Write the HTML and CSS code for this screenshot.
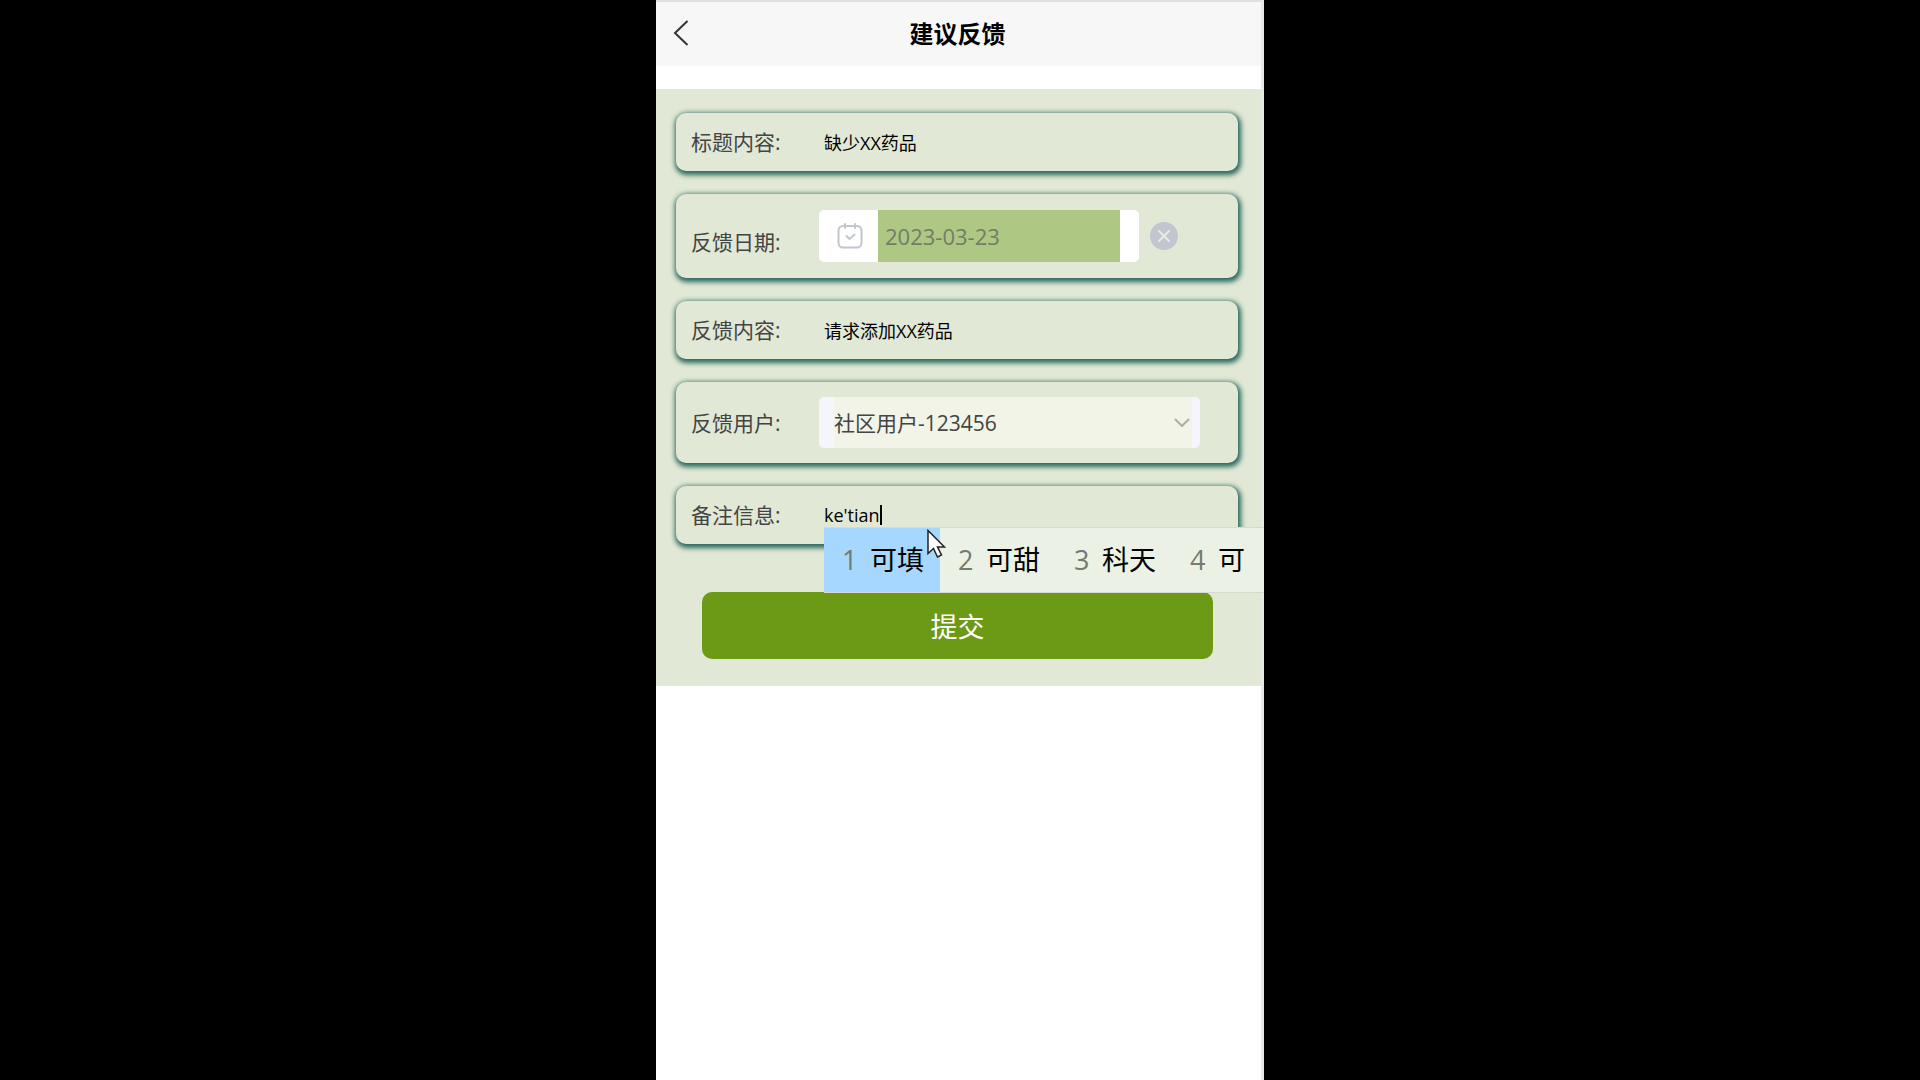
FILE: index.html
```html
<!DOCTYPE html>
<html lang="zh-CN">
<head>
  <meta charset="UTF-8">
  <meta name="viewport" content="width=device-width, initial-scale=1">
  <title>建议反馈</title>
  <link rel="stylesheet" href="styles.css">
</head>
<body>
  <div class="page">
    <!-- Header Section -->
    <header class="nav-bar">
      <a href="#" class="nav-back" aria-label="返回">
        <svg width="16" height="26" viewBox="0 0 16 26" fill="none" stroke="#333" stroke-width="2"><path d="M14.500 1L2 13l12.500 12"/></svg>
      </a>
      <h1>建议反馈</h1>
    </header>

    <!-- Feedback Form Section -->
    <form class="feedback-form">
      <div class="form-item">
        <label for="title">标题内容:</label>
        <input type="text" id="title" class="text-input" value="缺少XX药品">
      </div>

      <div class="form-item form-item-date">
        <label for="date">反馈日期:</label>
        <div class="date-box">
          <svg class="date-icon" width="26" height="26" viewBox="0 0 26 26" fill="none" stroke="#c3c5d0" stroke-width="2" stroke-linecap="round" stroke-linejoin="round">
            <rect x="1.500" y="3" width="23" height="21.500" rx="4.500"/>
            <path d="M8 1v4M18 1v4M9.500 13l3 3 5-4.500"/>
          </svg>
          <input type="text" id="date" class="date-input" value="2023-03-23">
        </div>
        <button type="button" class="clear-button" aria-label="清除">
          <svg width="28" height="28" viewBox="0 0 28 28" fill="none"><circle cx="14" cy="14" r="14" fill="#c3c6cf"/><path d="M8.500 8.500l11 11M19.500 8.500l-11 11" stroke="#e8ebe4" stroke-width="2"/></svg>
        </button>
      </div>

      <div class="form-item">
        <label for="content">反馈内容:</label>
        <input type="text" id="content" class="text-input" value="请求添加XX药品">
      </div>

      <div class="form-item form-item-select">
        <label for="user">反馈用户:</label>
        <div class="select-box">
          <select id="user">
            <option selected>社区用户-123456</option>
          </select>
          <svg class="select-arrow" width="16" height="10" viewBox="0 0 16 10" fill="none" stroke="#acaea6" stroke-width="2"><path d="M1 1l7 7 7-7"/></svg>
        </div>
      </div>

      <div class="form-item">
        <label for="remark">备注信息:</label>
        <input type="text" id="remark" class="text-input text-input-active" value="ke'tian">
        <span class="caret"></span>

        <!-- Input method candidates -->
        <div class="ime">
          <ol class="ime-list">
            <li class="selected"><span>1</span>可填</li>
            <li><span>2</span>可甜</li>
            <li><span>3</span>科天</li>
            <li><span>4</span>可</li>
          </ol>
          <svg class="pointer" width="19" height="29" viewBox="0 0 19 29" fill="#fff" stroke="#222" stroke-width="1.500"><path d="M1 1.500v23l5.500-5 4 8.500 4-2-4-8h7z"/></svg>
        </div>
      </div>

      <button type="submit" class="submit-button">提交</button>
    </form>
  </div>
</body>
</html>
```
FILE: styles.css
```css
/* Main Element Styles */
* {
  box-sizing: border-box;
}
body {
  margin: 0;
  background-color: #000;
  color: #000;
  font-family: "Open Sans", "Noto Sans CJK SC", sans-serif;
}
input, select, button {
  margin: 0;
  padding: 0;
  border: 0;
  outline: none;
  background: none;
  font-family: inherit;
}
.page {
  width: 100%;
  max-width: 608px;
  min-height: 100vh;
  margin: 0 auto;
  background-color: #fff;
  border-right: 3px solid #e8e8e8;
}

/* Header Styles */
.nav-bar {
  display: grid;
  grid-template-columns: 46px 1fr 48px;
  align-items: center;
  height: 66px;
  margin-bottom: 23px;
  background-color: #f7f7f7;
  border-top: 2px solid #e0e0e0;
}
.nav-back {
  display: flex;
  padding: 0 0 3px 17px;
}
.nav-bar h1 {
  margin: 0;
  font-size: 24px;
  line-height: 32px;
  text-align: center;
}

/* Form Styles */
.feedback-form {
  display: flex;
  flex-direction: column;
  gap: 23px;
  padding: 24px 23px 27px 20px;
  background-color: #e1e8d5;
}
.form-item {
  position: relative;
  display: flex;
  align-items: center;
  min-height: 58px;
  padding-left: 15px;
  border-radius: 10px;
  box-shadow: 1px 2px 5px 2px #29695f;
  background-color: #e1e8d5;
}
.form-item label {
  flex: 0 0 128px;
  color: #444;
  font-size: 21px;
  line-height: 40px;
}
.form-item-date {
  align-items: flex-end;
  padding-top: 16px;
  padding-bottom: 16px;
}
.form-item-select {
  padding-top: 15px;
  padding-bottom: 15px;
}
.text-input {
  flex: 1;
  min-width: 0;
  height: 40px;
  padding-left: 5px;
  font-size: 18px;
}
.text-input-active {
  flex: none;
  field-sizing: content;
}
.caret {
  width: 2px;
  height: 20px;
  background-color: #000;
}

/* Date Styles */
.date-box {
  display: flex;
  align-items: center;
  flex: 0 1 320px;
  min-width: 0;
  height: 52px;
  padding-right: 19px;
  border-radius: 5px;
  background-color: #fff;
}
.date-icon {
  flex: none;
  margin: 0 15px 0 18px;
}
.date-input {
  flex: 1;
  min-width: 0;
  height: 52px;
  padding-left: 7px;
  background-color: #aec783;
  color: #747b69;
  font-size: 22px;
}
.clear-button {
  display: flex;
  align-self: center;
  margin-left: 11px;
  cursor: pointer;
}

/* Select Styles */
.select-box {
  position: relative;
  flex: 0 1 381px;
  padding: 0 8px 0 15px;
  border-radius: 5px;
  background-color: #f5f6fb;
}
.select-box select {
  display: block;
  width: 100%;
  height: 51px;
  appearance: none;
  background-color: #f2f4e7;
  color: #444;
  font-size: 21px;
}
.select-arrow {
  position: absolute;
  top: 21px;
  right: 10px;
  pointer-events: none;
}

/* Input Method Styles */
.ime {
  position: absolute;
  z-index: 1;
  top: 41px;
  left: 148px;
  right: -26px;
  overflow: hidden;
  background-color: #ebf2e5;
  border-top: 1px solid #d5dbce;
  border-bottom: 1px solid #d5dbce;
}
.ime-list {
  display: flex;
  margin: 0;
  padding: 0;
  list-style: none;
}
.ime-list li {
  flex: none;
  width: 116px;
  padding-left: 18px;
  font-size: 27px;
  line-height: 64px;
  white-space: nowrap;
}
.ime-list span {
  display: inline-block;
  width: 28px;
  color: #757a72;
}
.ime-list .selected {
  background-color: #a6d7ff;
}
.pointer {
  position: absolute;
  top: 1px;
  left: 103px;
}

/* Button Styles */
.submit-button {
  height: 67px;
  margin: 25px 25px 0 26px;
  border-radius: 10px;
  background-color: #6c9a17;
  color: #fff;
  font-size: 27px;
  cursor: pointer;
}
```
